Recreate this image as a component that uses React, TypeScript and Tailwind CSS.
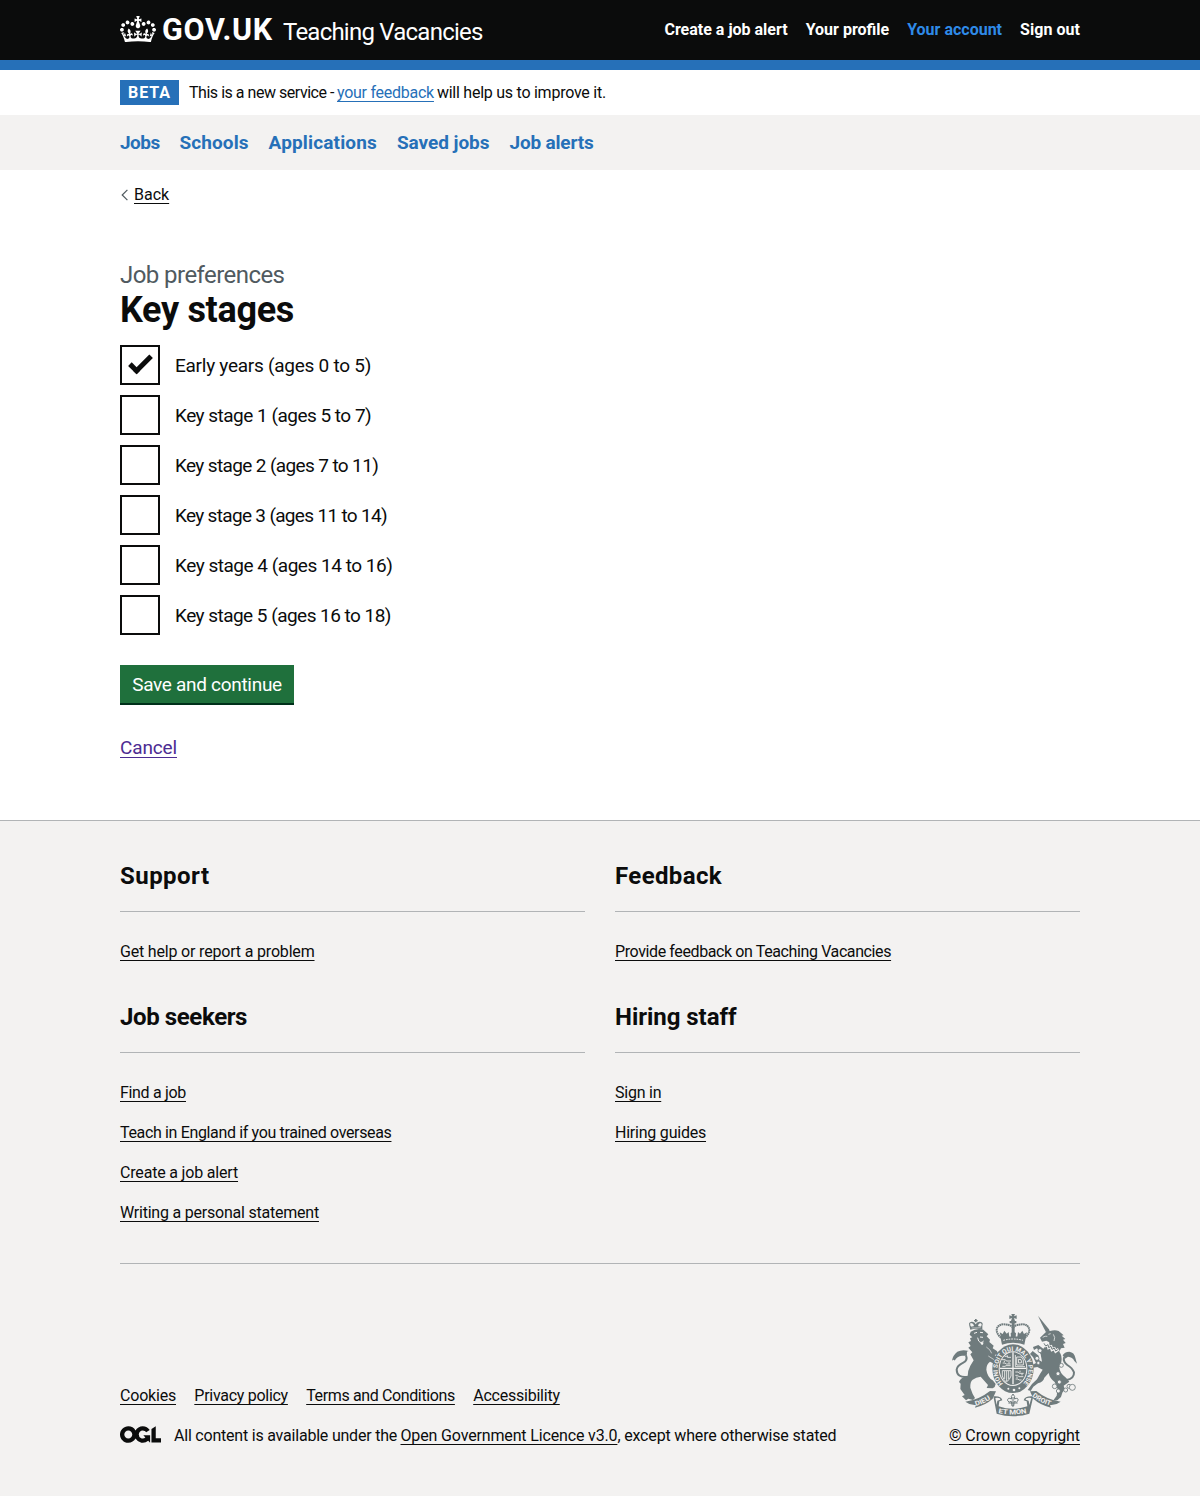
import React from "react";

const INK = "text-[#0b0c0c]";
const LINK = "underline decoration-1 underline-offset-[3px] [text-decoration-skip-ink:none]";

function Crown() {
  return (
    <svg className="mt-[16px] h-[26.45px] w-[36px] shrink-0" viewBox="0 0 132 97" fill="white" aria-hidden="true">
      <path d="M25 30.2c3.5 1.5 7.7-.2 9.1-3.7 1.5-3.6-.2-7.8-3.9-9.2-3.6-1.4-7.6.3-9.1 3.9-1.4 3.5.3 7.5 3.9 9zM9 39.5c3.6 1.5 7.8-.2 9.2-3.7 1.5-3.6-.2-7.8-3.9-9.1-3.6-1.5-7.6.2-9.1 3.8-1.4 3.5.3 7.5 3.8 9zM4.4 57.2c3.5 1.5 7.7-.2 9.1-3.8 1.5-3.6-.2-7.7-3.9-9.1-3.5-1.5-7.6.3-9.1 3.8-1.4 3.5.3 7.6 3.9 9.1zm38.3-21.4c3.5 1.5 7.7-.2 9.1-3.8 1.5-3.6-.2-7.7-3.9-9.1-3.6-1.5-7.6.3-9.1 3.8-1.3 3.6.4 7.7 3.9 9.1zm64.4-5.6c-3.6 1.5-7.8-.2-9.1-3.7-1.5-3.6.2-7.8 3.8-9.2 3.6-1.4 7.7.3 9.2 3.9 1.3 3.5-.4 7.5-3.9 9zm15.9 9.3c-3.6 1.5-7.7-.2-9.1-3.7-1.5-3.6.2-7.8 3.7-9.1 3.6-1.5 7.7.2 9.2 3.8 1.5 3.5-.3 7.5-3.8 9zm4.7 17.7c-3.6 1.5-7.8-.2-9.2-3.8-1.5-3.6.2-7.7 3.9-9.1 3.6-1.5 7.7.3 9.2 3.8 1.3 3.5-.4 7.6-3.9 9.1zM89.3 35.8c-3.6 1.5-7.8-.2-9.2-3.8-1.4-3.6.2-7.7 3.9-9.1 3.6-1.5 7.7.3 9.2 3.8 1.4 3.6-.3 7.7-3.9 9.1zM69.7 17.7l8.9 4.7V9.3l-8.9 2.8c-.2-.3-.5-.6-.9-.9L72.4 0H59.6l3.5 11.2c-.3.3-.6.5-.9.9l-8.8-2.8v13.1l8.8-4.7c.3.3.6.7.9.9l-5 15.4v.1c-.2.8-.4 1.6-.4 2.4 0 4.1 3.1 7.5 7 8.1h.2c.3 0 .7.1 1 .1.4 0 .7 0 1-.1h.2c4-.6 7.1-4.1 7.1-8.1 0-.8-.1-1.7-.4-2.4V34l-5.1-15.4c.4-.2.7-.6 1-.9zM66 92.8c16.9 0 32.8 1.1 47.1 3.2 4-16.9 8.9-26.7 14-33.5l-9.6-3.4c1 4.9 1.1 7.2 0 10.2-1.5-1.4-3-4.3-4.2-8.7L108.6 76c2.8-2 5-3.2 7.5-3.3-4.4 9.4-10 11.9-13.6 11.2-4.3-.8-6.3-4.6-5.6-7.9 1-4.7 5.7-5.9 8-.5 4.3-8.7-3-11.4-7.6-8.8 7.1-7.2 7.9-13.5 2.1-21.1-8 6.1-8.1 12.3-4.5 20.8-4.7-5.4-12.1-2.5-9.5 6.2 3.4-5.2 7.9-2 7.2 3.1-.6 4.3-6.4 7.8-13.5 7.2-10.3-.9-10.9-8-11.2-13.8 2.5-.5 7.1 1.8 11 7.3L80.2 60c-4.1 4.4-8 5.3-12.3 5.4 1.4-4.4 8-11.6 8-11.6H55.5s6.4 7.2 7.9 11.6c-4.2-.1-8-1-12.3-5.4l1.4 16.4c3.9-5.5 8.5-7.7 10.9-7.3-.3 5.8-.9 12.8-11.1 13.8-7.2.6-12.9-2.9-13.5-7.2-.7-5 3.8-8.3 7.1-3.1 2.7-8.7-4.6-11.6-9.4-6.2 3.7-8.5 3.6-14.7-4.6-20.8-5.8 7.6-5 13.9 2.2 21.1-4.7-2.6-11.9.1-7.7 8.8 2.3-5.5 7.1-4.2 8.1.5.7 3.3-1.3 7.1-5.7 7.9-3.5.7-9-1.8-13.5-11.2 2.5.1 4.7 1.3 7.5 3.3l-4.7-15.4c-1.2 4.4-2.7 7.2-4.3 8.7-1.1-3-.9-5.3 0-10.2l-9.5 3.4c5 6.9 9.9 16.7 14 33.5 14.8-2.1 30.8-3.2 47.7-3.2z" />
    </svg>
  );
}

function OglLogo() {
  return (
    <svg className="mr-[13px] h-[17px] w-[41px] shrink-0" viewBox="0 0 483.2 195.7" fill="#0b0c0c" aria-hidden="true">
      <path d="M421.5 142.8V.1l-50.7 32.3v161.1h112.4v-50.7zm-122.3-9.6A47.12 47.12 0 0 1 221 97.8c0-26 21.1-47.1 47.1-47.1 16.7 0 31.4 8.7 39.7 21.8l42.7-27.2A97.63 97.63 0 0 0 268.1 0c-36.5 0-68.3 20.1-85.1 49.7A98 98 0 0 0 97.8 0C43.9 0 0 43.9 0 97.8s43.9 97.8 97.8 97.8c36.5 0 68.3-20.1 85.1-49.7a97.76 97.76 0 0 0 149.6 25.4l19.4 22.2h3v-87.8h-80l24.3 27.5zM97.8 145c-26 0-47.1-21.1-47.1-47.1s21.1-47.1 47.1-47.1 47.1 21.1 47.1 47.1S123.8 145 97.8 145" />
    </svg>
  );
}

function RoyalArms() {
  const g = "#6f7b7d";
  const bg = "#f3f2f1";
  return (
    <svg className="h-[102px] w-[125px] overflow-visible" viewBox="36 27 375 306" fill={g} aria-hidden="true">
      {/* lion */}
      <path d="M91 74L88 62Q84 52 95 50 104 49 107 58 111 49 120 50 131 52 127 62L127 74Q108 68 91 74Z" />
      <path d="M105 42h5v10h-5zM102 45h11v4h-11z" />
      <path d="M92 55q-3 2 1 9l8-1q0-7-9-8ZM122 55q4 2 1 9l-8-1q0-7 7-8ZM95 69l27-1" fill={bg} stroke={bg} strokeWidth="1.5" />
      <path d="M92 80Q110 68 130 74L145 88 140 94 150 104 148 111 161 122 158 130Q171 136 175 146L164 150 171 160 164 177 150 170Q139 178 139 194 142 216 158 226L167 237Q166 247 158 250L140 249 144 240 122 215Q108 217 98 224 90 230 91 248L98 267 105 279 99 285 85 281 78 286 66 274 74 270 61 252 62 236 57 231Q61 218 83 214 83 196 91 182L101 166 91 148 97 142 85 128 92 123 85 112 93 108 90 100 97 97 89 89Z" />
      <path d="M102 85l9-3M120 82l9 1M113 98l3 10q4 6 10 4l5-4M120 96l9 1" fill="none" stroke={bg} strokeWidth="3" />
      <path d="M121 112q1 9 6 8 4-1 3-8Z" fill={bg} />
      <path d="M84 215Q51 220 50 194 51 182 70 173 84 166 78 151" fill="none" stroke={g} strokeWidth="6" />
      <path d="M36 167Q38 151 52 140 67 132 86 138 79 139 81 145L80 152 66 152Q51 154 44 167 42 161 36 167Z" />
      <path d="M139 126q13 8 16 19M145 153l17 11" fill="none" stroke={bg} strokeWidth="2" />
      {/* unicorn */}
      <path d="M294 32L328 74 318 82 305 56Z" />
      <path d="M300 98L318 81 324 73 330 78Q345 74 356 78L371 91 365 92 376 102 369 104 377 114 369 117 374 128 363 130 356 143 322 125 328 112 319 107 306 110Z" />
      <path d="M320 119L357 139Q368 154 364 171L358 187Q359 206 378 218L388 230 371 242 374 253 367 263 363 276 352 286 339 287 350 272 353 252 344 231Q329 220 326 204L313 218Q310 231 294 235L280 245 272 258 263 255 276 237 291 223 300 207 308 194 292 186 280 188 278 179 288 174 279 156 270 147 278 138 296 152 298 166 306 170 302 148 291 130 282 135 279 126 295 120 310 131Z" />
      <path d="M308 97q8-5 14-3M325 88l7-2M340 88q7 9 2 20" fill="none" stroke={bg} strokeWidth="2.2" />
      <path d="M313 114l4 8 7-3 2 9 7-3 3 9 7-3 4 8 9-6" fill="none" stroke={bg} strokeWidth="9" />
      <path d="M312 115l5 8 7-4 2 9 7-4 3 9 7-4 4 9 8-5" fill="none" stroke={g} strokeWidth="3" />
      <g fill={bg} stroke={g} strokeWidth="2.5">
        <circle cx="300" cy="137" r="6" /><circle cx="291" cy="160" r="6" /><circle cx="295" cy="174" r="5" />
        <circle cx="364" cy="181" r="6" /><circle cx="354" cy="206" r="6" /><circle cx="358" cy="231" r="6" />
        <circle cx="344" cy="244" r="7" /><circle cx="355" cy="258" r="6" /><circle cx="377" cy="255" r="6" />
        <circle cx="387" cy="244" r="6" /><circle cx="397" cy="247" r="9" />
      </g>
      <path d="M380 225Q403 220 402 202 397 189 382 180 369 171 372 157" fill="none" stroke={g} strokeWidth="6" />
      <path d="M368 151Q373 141 388 140 403 142 406 158L411 176 403 168Q398 156 384 155L375 161Z" />
      {/* royal crown */}
      <path d="M214 27h11l-3 7 8-3v11l-8-3 3 9h4v7h-20v-7h4l3-9-8 3V31l8 3Z" />
      <path d="M188 102C160 82 168 58 191 58q20 0 28 10 8-10 28-10c23 0 31 24 3 44" fill="none" stroke={g} strokeWidth="6" strokeDasharray="5 1.3" />
      <path d="M215 54h9v35h-9zM184 101l-5-19 9 5 5-10 7 9 6-5 2 14h5l-1-10 8-7 8 7-1 10h5l2-14 6 5 7-9 5 10 9-5-5 19Z" />
      <path d="M182 100Q219 89 257 100l-4 19Q219 108 186 119Z" />
      <path d="M190 106q29-8 59 0" fill="none" stroke={bg} strokeWidth="3" strokeDasharray="5 3" />
      {/* garter and shield */}
      <ellipse cx="219" cy="191" rx="62" ry="73" />
      <ellipse cx="219" cy="191" rx="43" ry="52" fill={bg} />
      <ellipse cx="219" cy="191" rx="40" ry="49" />
      <path id="garter" d="M189 236A46 56 0 1 1 249 236" fill="none" />
      <text fill={bg} fontFamily="Roboto" fontWeight="700" fontSize="19">
        <textPath href="#garter" textLength="252" lengthAdjust="spacingAndGlyphs">HONI SOIT QUI MAL Y PENSE</textPath>
      </text>
      <path d="M219 142v96M179 190h80" stroke={bg} strokeWidth="4" />
      <g fill="none" stroke={bg} strokeWidth="2.6">
        <path d="M186 164h10l3 4h14M188 174h7l4 3h13M194 154h6l4 3h9M187 184h8l3-2h14M202 151v6M193 167v4M207 171v5" />
        <path d="M226 150v35h29M230 156h14l6 9v15h-20ZM235 163l8 1 2 9-9 1Z" />
        <path d="M187 197v16q4 13 12 18 11-7 14-18v-16ZM194 198v24M200 198v31M206 198v25" />
        <path d="M226 201h9l3 4h13M226 211h7l4 4h13M227 222h7l3 3h8M240 197v5M231 214v5M246 206v5" />
      </g>
      <g fill={bg}><circle cx="205" cy="251" r="3" /><circle cx="222" cy="255" r="4" /><circle cx="238" cy="250" r="3" /></g>
      {/* motto ribbon */}
      <path d="M76 290Q116 285 150 258L168 259 158 281Q139 299 105 308L108 300Q92 302 76 290ZM362 290Q322 285 289 258L270 259 280 281Q299 299 333 308L330 300Q346 302 362 290Z" />
      <path d="M160 274Q184 272 187 286L178 289 176 304Q219 319 262 304L260 289 251 286Q254 272 280 274L268 326Q219 341 170 326Z" />
      <path d="M166 279Q181 277 181 284L172 287 170 300ZM274 279Q257 277 257 284L266 287 268 300Z" fill={bg} />
      <path id="motto-left" d="M107 303Q137 295 160 275" fill="none" />
      <path id="motto-mid" d="M175 324Q219 333 265 323" fill="none" />
      <path id="motto-right" d="M276 274Q301 294 336 303" fill="none" />
      <g fill={bg} fontFamily="Roboto" fontWeight="700" fontSize="20">
        <text><textPath href="#motto-left" textLength="50" lengthAdjust="spacingAndGlyphs">DIEU</textPath></text>
        <text><textPath href="#motto-mid" textLength="86" lengthAdjust="spacingAndGlyphs">ET MON</textPath></text>
        <text><textPath href="#motto-right" textLength="62" lengthAdjust="spacingAndGlyphs">DROIT</textPath></text>
      </g>
      {/* plant badge */}
      <path d="M219 267q8 8 4 15 13-6 11 5-4 8-11 2l-2 14h-5l-2-14q-8 6-11-2-1-11 12-5-4-7 4-15Z" fill={bg} stroke={g} strokeWidth="3" />
      <path d="M219 276v28M205 294h28" fill="none" stroke={g} strokeWidth="3" />
    </svg>
  );
}

function Checkbox({ checked, children, tracking }: { checked?: boolean; children: string; tracking: string }) {
  return (
    <label className="flex h-[40px]">
      <span className="relative size-[40px] shrink-0 border-2 border-[#0b0c0c]">
        {checked && (
          <span className="absolute top-[9px] left-[7px] h-[12px] w-[23px] -rotate-45 border-b-5 border-l-5 border-[#0b0c0c]" />
        )}
      </span>
      <span className={`pt-[8px] pl-[15px] text-[19px] leading-[25px] ${tracking}`}>{children}</span>
    </label>
  );
}

type Item = { text: string; tracking: string };

function FooterSection({ title, tracking, links }: { title: string; tracking: string; links: Item[] }) {
  return (
    <section>
      <h2 className={`border-b border-[#b1b4b6] pb-[20px] text-[24px] leading-[30px] font-bold ${tracking}`}>{title}</h2>
      <ul className="mt-[30px] flex flex-col gap-[20px]">
        {links.map((l) => (
          <li key={l.text} className="leading-[20px]">
            <a className={`${LINK} ${l.tracking}`}>{l.text}</a>
          </li>
        ))}
      </ul>
    </section>
  );
}

const stages: Item[] = [
  { text: "Early years (ages 0 to 5)", tracking: "tracking-[-0.26px]" },
  { text: "Key stage 1 (ages 5 to 7)", tracking: "tracking-[-0.51px]" },
  { text: "Key stage 2 (ages 7 to 11)", tracking: "tracking-[-0.63px]" },
  { text: "Key stage 3 (ages 11 to 14)", tracking: "tracking-[-0.68px]" },
  { text: "Key stage 4 (ages 14 to 16)", tracking: "tracking-[-0.48px]" },
  { text: "Key stage 5 (ages 16 to 18)", tracking: "tracking-[-0.53px]" },
];

export default function App() {
  return (
    <div className={`min-h-[1496px] bg-white font-['Roboto',sans-serif] text-[16px] ${INK}`}>
      <header className="h-[70px] border-b-10 border-[#2670b8] bg-[#0b0c0c] text-white">
        <div className="mx-auto flex w-[960px] justify-between">
          <div className="flex">
            <Crown />
            <span className="ml-[6px] w-[110px] pt-[12px] text-[30.5px] leading-[36px] font-bold tracking-[0.75px]">GOV.UK</span>
            <span className="ml-[11px] pt-[17px] text-[24px] leading-[30px] tracking-[-0.77px]">Teaching Vacancies</span>
          </div>
          <nav className="flex gap-[18px] pt-[20px] leading-[20px] font-bold">
            <a>Create a job alert</a>
            <a>Your profile</a>
            <a className="text-[#2f8be8]">Your account</a>
            <a className="tracking-[0.05px]">Sign out</a>
          </nav>
        </div>
      </header>

      <div className="mx-auto flex h-[45px] w-[960px] pt-[10px]">
        <strong className="mr-[10px] flex h-[25px] w-[59px] justify-center bg-[#2670b8] pt-[3px] leading-[20px] tracking-[0.95px] text-white">
          BETA
        </strong>
        <p className="flex pt-[3px] leading-[20px]">
          <span className="w-[148px] tracking-[-0.47px]">This is a new service -</span>
          <a className={`text-[#2670b8] tracking-[-0.26px] ${LINK} h-[20px]`}>your feedback</a>
          <span className="ml-[3px] tracking-[-0.25px]">will help us to improve it.</span>
        </p>
      </div>

      <nav className="h-[55px] bg-[#f3f2f1]">
        <div className="mx-auto flex w-[960px] gap-[20px] pt-[15px] text-[19px] leading-[25px] font-bold text-[#2670b8]">
          <a className="tracking-[-0.55px]">Jobs</a>
          <a className="tracking-[0.07px]">Schools</a>
          <a className="tracking-[0.15px]">Applications</a>
          <a className="tracking-[-0.05px]">Saved jobs</a>
          <a className="tracking-[-0.18px]">Job alerts</a>
        </div>
      </nav>

      <main className="mx-auto h-[650px] w-[960px] pt-[15px]">
        <a className="flex h-[20px] items-center leading-[20px]">
          <svg className="mr-[6px] ml-[1px] h-[12px] w-[7px]" viewBox="0 0 7 12" fill="none" stroke="#505a5f" strokeWidth="1.2" aria-hidden="true">
            <path d="M6.4 .8L1.2 6l5.2 5.2" />
          </svg>
          <span className={`${LINK}`}>Back</span>
        </a>

        <form className="mt-[55px]">
          <p className="text-[24px] leading-[30px] tracking-[-0.56px] text-[#505a5f]">Job preferences</p>
          <h1 className="text-[36px] leading-[40px] font-bold tracking-[-0.32px]">Key stages</h1>
          <div className="mt-[15px] flex flex-col gap-[10px]">
            {stages.map((s, i) => (
              <Checkbox key={s.text} checked={i === 0} tracking={s.tracking}>
                {s.text}
              </Checkbox>
            ))}
          </div>
          <button
            type="button"
            className="mt-[30px] block h-[38px] w-[174px] bg-[#1f703c] text-[19px] leading-[25px] tracking-[-0.3px] text-white shadow-[0_2px_0_#00301a]"
          >
            Save and continue
          </button>
          <p className="mt-[32px] text-[19px] leading-[25px]">
            <a className={`text-[#4c2c92] tracking-[-0.14px] ${LINK}`}>Cancel</a>
          </p>
        </form>
      </main>

      <footer className="h-[676px] border-t border-[#b1b4b6] bg-[#f3f2f1] pt-[40px]">
        <div className="mx-auto w-[960px]">
          <div className="grid grid-cols-2 gap-x-[30px] gap-y-[40px] border-b border-[#b1b4b6] pb-[40px]">
            <FooterSection title="Support" tracking="tracking-[0.46px]" links={[{ text: "Get help or report a problem", tracking: "tracking-[-0.18px]" }]} />
            <FooterSection title="Feedback" tracking="tracking-[0.37px]" links={[{ text: "Provide feedback on Teaching Vacancies", tracking: "tracking-[-0.39px]" }]} />
            <FooterSection
              title="Job seekers"
              tracking="tracking-[-0.39px]"
              links={[
                { text: "Find a job", tracking: "tracking-[-0.32px]" },
                { text: "Teach in England if you trained overseas", tracking: "tracking-[-0.35px]" },
                { text: "Create a job alert", tracking: "tracking-[-0.18px]" },
                { text: "Writing a personal statement", tracking: "tracking-[-0.22px]" },
              ]}
            />
            <FooterSection
              title="Hiring staff"
              tracking="tracking-[-0.04px]"
              links={[
                { text: "Sign in", tracking: "tracking-[-0.24px]" },
                { text: "Hiring guides", tracking: "tracking-[-0.22px]" },
              ]}
            />
          </div>

          <div className="mt-[50px] flex items-end justify-between leading-[20px]">
            <div>
              <ul className="mb-[20px] flex gap-[18.3px]">
                <li><a className={`tracking-[-0.2px] ${LINK}`}>Cookies</a></li>
                <li><a className={`tracking-[-0.28px] ${LINK}`}>Privacy policy</a></li>
                <li><a className={`tracking-[-0.37px] ${LINK}`}>Terms and Conditions</a></li>
                <li><a className={`tracking-[-0.23px] ${LINK}`}>Accessibility</a></li>
              </ul>
              <div className="flex h-[20px]">
                <OglLogo />
                <p className="flex">
                  <span className="w-[226.5px] tracking-[-0.21px]">All content is available under the</span>
                  <a className={`tracking-[-0.15px] ${LINK}`}>Open Government Licence v3.0</a>
                  <span className="tracking-[-0.17px]">, except where otherwise stated</span>
                </p>
              </div>
            </div>
            <div className="flex w-[131px] flex-col">
              <div className="ml-[3px] h-[112px]"><RoyalArms /></div>
              <a className={`tracking-[-0.09px] whitespace-nowrap ${LINK}`}>© Crown copyright</a>
            </div>
          </div>
        </div>
      </footer>
    </div>
  );
}
